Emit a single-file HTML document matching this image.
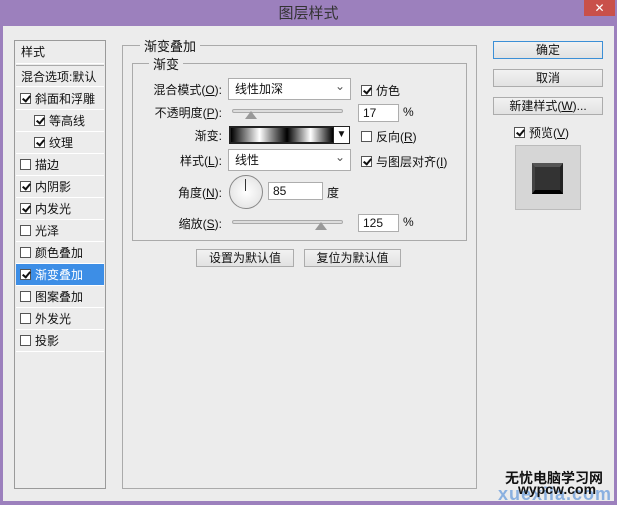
<!DOCTYPE html><html><head><meta charset="utf-8"><style>
*{margin:0;padding:0;box-sizing:border-box}
body{width:617px;height:504px;background:#9c80bd;font-family:"Liberation Sans","Noto Sans CJK SC",sans-serif;font-size:12px;color:#111;position:relative;overflow:hidden}
.a{position:absolute}
.body{left:3px;top:26px;width:611px;height:475px;background:#ececec}
.title{left:0;top:2px;width:617px;text-align:center;font-size:15px;color:#333}
.close{left:584px;top:0;width:31px;height:16px;background:#c9504a;color:#fff;text-align:center;font-size:12px;line-height:16px}
.left{left:14px;top:40px;width:92px;height:449px;border:1px solid #9a9a9a;background:#ececec}
.row{position:absolute;left:1px;width:88px;height:22px;line-height:22px;border-bottom:1px solid #fff;white-space:nowrap}
.cb{display:inline-block;width:11px;height:11px;border:1px solid #555;background:#fff;vertical-align:-1px;margin-right:4px;position:relative}
.cb.k:after{content:"";position:absolute;left:3px;top:0px;width:3px;height:6px;border-right:2px solid #111;border-bottom:2px solid #111;transform:rotate(40deg)}
.grp{border:1px solid #aaa}
.lg{background:#ececec;padding:0 4px;font-size:13px}
.lbl{text-align:right;width:100px;font-size:12px}
.sel{background:#fff;border:1px solid #adadad;padding-left:6px;line-height:20px}
.sel:after{content:"⌄";position:absolute;right:5px;top:-3px;color:#555}
.inp{background:#fff;border:1px solid #adadad;padding-left:4px;line-height:16px}
.btn{background:linear-gradient(#f2f2f2,#e2e2e2);border:1px solid #acacac;text-align:center;line-height:16px}
.sl{height:4px;background:#ddd;border:1px solid #aaa;border-radius:2px}
.th{width:0;height:0;border-left:6px solid transparent;border-right:6px solid transparent;border-bottom:8px solid #999}
</style></head><body>
<div class="a title">图层样式</div>
<div class="a close">✕</div>
<div class="a body"></div>
<div class="a left">
<div class="row" style="top:0;height:23px;padding-left:5px">样式</div>
<div class="row" style="top:24px;padding-left:5px;border-top:1px solid #aaa">混合选项:默认</div>
<div class="row" style="top:47px;padding-left:4px"><span class="cb k"></span>斜面和浮雕</div>
<div class="row" style="top:69px;padding-left:18px"><span class="cb k"></span>等高线</div>
<div class="row" style="top:91px;padding-left:18px"><span class="cb k"></span>纹理</div>
<div class="row" style="top:113px;padding-left:4px"><span class="cb"></span>描边</div>
<div class="row" style="top:135px;padding-left:4px"><span class="cb k"></span>内阴影</div>
<div class="row" style="top:157px;padding-left:4px"><span class="cb k"></span>内发光</div>
<div class="row" style="top:179px;padding-left:4px"><span class="cb"></span>光泽</div>
<div class="row" style="top:201px;padding-left:4px"><span class="cb"></span>颜色叠加</div>
<div class="row" style="top:223px;padding-left:4px;background:#3d8ee6;color:#fff"><span class="cb k"></span>渐变叠加</div>
<div class="row" style="top:245px;padding-left:4px"><span class="cb"></span>图案叠加</div>
<div class="row" style="top:267px;padding-left:4px"><span class="cb"></span>外发光</div>
<div class="row" style="top:289px;padding-left:4px"><span class="cb"></span>投影</div>
</div>
<div class="a grp" style="left:122px;top:45px;width:355px;height:444px"></div>
<div class="a lg" style="left:140px;top:36px">渐变叠加</div>
<div class="a grp" style="left:132px;top:63px;width:335px;height:178px"></div>
<div class="a lg" style="left:149px;top:54px">渐变</div>
<div class="a lbl" style="left:122px;top:81px">混合模式(<u>O</u>):</div>
<div class="a sel" style="left:228px;top:78px;width:123px;height:22px">线性加深</div>
<div class="a" style="left:361px;top:82px"><span class="cb k"></span>仿色</div>
<div class="a lbl" style="left:122px;top:104px">不透明度(<u>P</u>):</div>
<div class="a sl" style="left:232px;top:109px;width:111px"></div>
<div class="a th" style="left:245px;top:111px"></div>
<div class="a inp" style="left:358px;top:104px;width:41px;height:18px">17</div>
<div class="a" style="left:403px;top:105px">%</div>
<div class="a lbl" style="left:122px;top:127px">渐变:</div>
<div class="a" style="left:229px;top:126px;width:106px;height:18px;border:2px solid #222;background:linear-gradient(90deg,#000,#fff 28%,#888 40%,#000 55%,#fff 78%,#000)"></div>
<div class="a" style="left:333px;top:126px;width:17px;height:18px;border:1px solid #222;background:#fff;text-align:center;font-size:10px;line-height:16px">▼</div>
<div class="a" style="left:361px;top:128px"><span class="cb"></span>反向(<u>R</u>)</div>
<div class="a lbl" style="left:122px;top:152px">样式(<u>L</u>):</div>
<div class="a sel" style="left:228px;top:149px;width:123px;height:22px">线性</div>
<div class="a" style="left:361px;top:153px"><span class="cb k"></span>与图层对齐(<u>I</u>)</div>
<div class="a lbl" style="left:122px;top:184px">角度(<u>N</u>):</div>
<div class="a" style="left:229px;top:175px;width:34px;height:34px;border-radius:50%;border:1px solid #888;background:radial-gradient(#fff,#ddd)"></div>
<div class="a" style="left:245px;top:179px;width:1px;height:12px;background:#333"></div>
<div class="a inp" style="left:268px;top:182px;width:55px;height:18px">85</div>
<div class="a" style="left:327px;top:184px">度</div>
<div class="a lbl" style="left:122px;top:215px">缩放(<u>S</u>):</div>
<div class="a sl" style="left:232px;top:220px;width:111px"></div>
<div class="a th" style="left:315px;top:222px"></div>
<div class="a inp" style="left:358px;top:214px;width:41px;height:18px">125</div>
<div class="a" style="left:403px;top:215px">%</div>
<div class="a btn" style="left:196px;top:249px;width:98px;height:18px">设置为默认值</div>
<div class="a btn" style="left:304px;top:249px;width:97px;height:18px">复位为默认值</div>
<div class="a btn" style="left:493px;top:41px;width:110px;height:18px;border-color:#3c8fd6">确定</div>
<div class="a btn" style="left:493px;top:69px;width:110px;height:18px">取消</div>
<div class="a btn" style="left:493px;top:97px;width:110px;height:18px">新建样式(<u>W</u>)...</div>
<div class="a" style="left:514px;top:124px"><span class="cb k"></span>预览(<u>V</u>)</div>
<div class="a" style="left:515px;top:145px;width:66px;height:65px;background:#d6d6d6;border:1px solid #bbb"></div>
<div class="a" style="left:532px;top:163px;width:31px;height:31px;background:#333;border-top:4px solid #555;border-bottom:4px solid #000;border-left:3px solid #444;border-right:3px solid #222"></div>
<div class="a" style="left:505px;top:468px;font-size:14px;font-weight:bold;color:#111">无忧电脑学习网</div>
<div class="a" style="left:498px;top:484px;font-size:18px;font-weight:bold;color:#8ab0e0;letter-spacing:1px">xuexila.com</div>
<div class="a" style="left:518px;top:481px;font-size:14px;font-weight:bold;color:#111">wypcw.com</div>
</body></html>
